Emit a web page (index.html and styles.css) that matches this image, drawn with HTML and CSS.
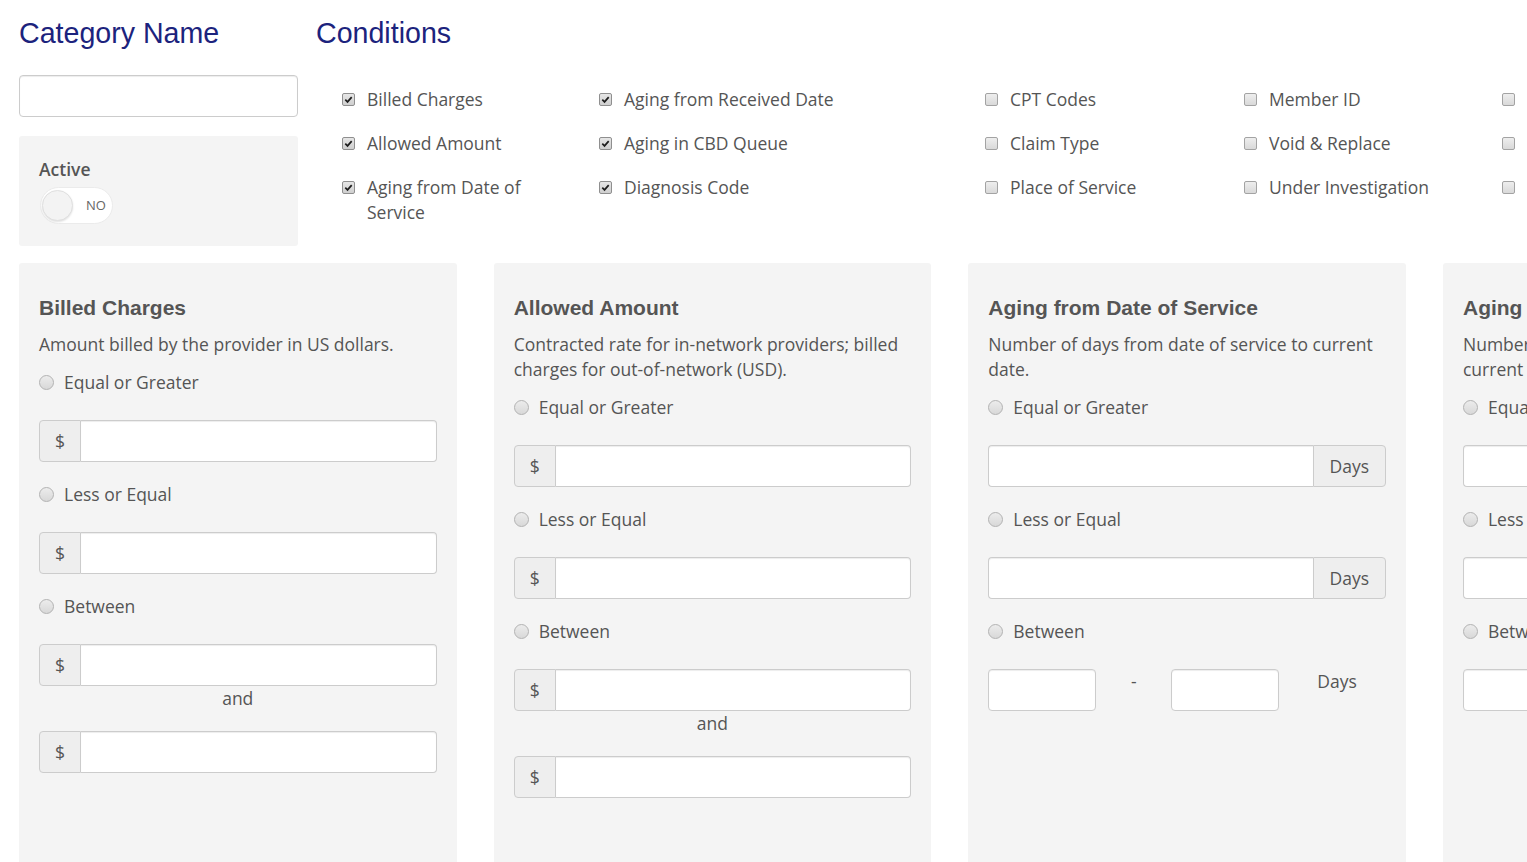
FILE: index.html
```html
<!DOCTYPE html>
<html lang="en">
<head>
<meta charset="utf-8">
<title>Category Conditions</title>
<link rel="stylesheet" href="styles.css">
</head>
<body>
<div class="top">
  <section class="left">
    <h1 class="heading">Category Name</h1>
    <input class="name-input" type="text">
    <div class="active-panel">
      <div class="active-label">Active</div>
      <div class="toggle"><span class="knob"></span><span class="toggle-text">NO</span></div>
    </div>
  </section>
  <section class="conditions">
    <h1 class="heading">Conditions</h1>
    <div class="cond-grid">
      <label class="cond"><span class="cb checked"><svg viewBox="0 0 11 11" width="11" height="11"><path d="M2.3 5.7 L4.5 7.9 L8.7 3.1" fill="none" stroke="#1e1e1e" stroke-width="1.7"/></svg></span><span class="cond-label">Billed Charges</span></label>
      <label class="cond"><span class="cb checked"><svg viewBox="0 0 11 11" width="11" height="11"><path d="M2.3 5.7 L4.5 7.9 L8.7 3.1" fill="none" stroke="#1e1e1e" stroke-width="1.7"/></svg></span><span class="cond-label">Aging from Received Date</span></label>
      <label class="cond"><span class="cb"></span><span class="cond-label">CPT Codes</span></label>
      <label class="cond"><span class="cb"></span><span class="cond-label">Member ID</span></label>
      <label class="cond"><span class="cb"></span><span class="cond-label">Provider Name</span></label>

      <label class="cond"><span class="cb checked"><svg viewBox="0 0 11 11" width="11" height="11"><path d="M2.3 5.7 L4.5 7.9 L8.7 3.1" fill="none" stroke="#1e1e1e" stroke-width="1.7"/></svg></span><span class="cond-label">Allowed Amount</span></label>
      <label class="cond"><span class="cb checked"><svg viewBox="0 0 11 11" width="11" height="11"><path d="M2.3 5.7 L4.5 7.9 L8.7 3.1" fill="none" stroke="#1e1e1e" stroke-width="1.7"/></svg></span><span class="cond-label">Aging in CBD Queue</span></label>
      <label class="cond"><span class="cb"></span><span class="cond-label">Claim Type</span></label>
      <label class="cond"><span class="cb"></span><span class="cond-label">Void &amp; Replace</span></label>
      <label class="cond"><span class="cb"></span><span class="cond-label">Claim Status</span></label>

      <label class="cond"><span class="cb checked"><svg viewBox="0 0 11 11" width="11" height="11"><path d="M2.3 5.7 L4.5 7.9 L8.7 3.1" fill="none" stroke="#1e1e1e" stroke-width="1.7"/></svg></span><span class="cond-label">Aging from Date of Service</span></label>
      <label class="cond"><span class="cb checked"><svg viewBox="0 0 11 11" width="11" height="11"><path d="M2.3 5.7 L4.5 7.9 L8.7 3.1" fill="none" stroke="#1e1e1e" stroke-width="1.7"/></svg></span><span class="cond-label">Diagnosis Code</span></label>
      <label class="cond"><span class="cb"></span><span class="cond-label">Place of Service</span></label>
      <label class="cond"><span class="cb"></span><span class="cond-label">Under Investigation</span></label>
      <label class="cond"><span class="cb"></span><span class="cond-label">Billing Provider</span></label>
    </div>
  </section>
</div>

<div class="cards">
  <div class="card">
    <h2 class="card-title">Billed Charges</h2>
    <p class="card-desc">Amount billed by the provider in US dollars.</p>
    <div class="radio-row first"><span class="radio"></span>Equal or Greater</div>
    <div class="input-group"><span class="addon addon-left">$</span><input class="field field-right" type="text"></div>
    <div class="radio-row"><span class="radio"></span>Less or Equal</div>
    <div class="input-group"><span class="addon addon-left">$</span><input class="field field-right" type="text"></div>
    <div class="radio-row"><span class="radio"></span>Between</div>
    <div class="input-group"><span class="addon addon-left">$</span><input class="field field-right" type="text"></div>
    <div class="and">and</div>
    <div class="input-group after-and"><span class="addon addon-left">$</span><input class="field field-right" type="text"></div>
  </div>

  <div class="card">
    <h2 class="card-title">Allowed Amount</h2>
    <p class="card-desc">Contracted rate for in-network providers; billed charges for out-of-network (USD).</p>
    <div class="radio-row first"><span class="radio"></span>Equal or Greater</div>
    <div class="input-group"><span class="addon addon-left">$</span><input class="field field-right" type="text"></div>
    <div class="radio-row"><span class="radio"></span>Less or Equal</div>
    <div class="input-group"><span class="addon addon-left">$</span><input class="field field-right" type="text"></div>
    <div class="radio-row"><span class="radio"></span>Between</div>
    <div class="input-group"><span class="addon addon-left">$</span><input class="field field-right" type="text"></div>
    <div class="and">and</div>
    <div class="input-group after-and"><span class="addon addon-left">$</span><input class="field field-right" type="text"></div>
  </div>

  <div class="card">
    <h2 class="card-title">Aging from Date of Service</h2>
    <p class="card-desc">Number of days from date of service to current date.</p>
    <div class="radio-row first"><span class="radio"></span>Equal or Greater</div>
    <div class="input-group"><input class="field field-left" type="text"><span class="addon addon-right">Days</span></div>
    <div class="radio-row"><span class="radio"></span>Less or Equal</div>
    <div class="input-group"><input class="field field-left" type="text"><span class="addon addon-right">Days</span></div>
    <div class="radio-row"><span class="radio"></span>Between</div>
    <div class="range"><input class="range-input" type="text"><span class="dash">-</span><input class="range-input" type="text"><span class="range-unit">Days</span></div>
  </div>

  <div class="card">
    <h2 class="card-title">Aging from Received Date</h2>
    <p class="card-desc">Number of days from the received date to current date.</p>
    <div class="radio-row first"><span class="radio"></span>Equal or Greater</div>
    <div class="input-group"><input class="field field-left" type="text"><span class="addon addon-right">Days</span></div>
    <div class="radio-row"><span class="radio"></span>Less or Equal</div>
    <div class="input-group"><input class="field field-left" type="text"><span class="addon addon-right">Days</span></div>
    <div class="radio-row"><span class="radio"></span>Between</div>
    <div class="range"><input class="range-input" type="text"><span class="dash">-</span><input class="range-input" type="text"><span class="range-unit">Days</span></div>
  </div>
</div>
</body>
</html>
```

FILE: styles.css
```css
html, body {
  margin: 0;
  padding: 0;
  overflow: hidden;
  background: #fff;
}

body {
  font-family: "Open Sans", "DejaVu Sans", sans-serif;
  font-size: 17.5px;
  line-height: 25px;
  color: #555;
}

input {
  font-family: "Open Sans", sans-serif;
  font-size: 17.5px;
  color: #555;
  outline: none;
  margin: 0;
}

.top {
  display: flex;
  gap: 18px;
  padding-left: 19px;
}

.left {
  flex: none;
  width: 279px;
}

.heading {
  margin: 0;
  padding-top: 17px;
  font-family: "Liberation Sans", Arial, sans-serif;
  font-weight: 400;
  font-size: 28.6px;
  line-height: 32px;
  color: #1c237d;
}

.name-input {
  display: block;
  box-sizing: border-box;
  width: 100%;
  height: 42px;
  margin-top: 26px;
  border: 1px solid #ccc;
  border-radius: 4px;
  background: #fff;
  box-shadow: inset 0 1px 1px rgba(0, 0, 0, 0.075);
}

.active-panel {
  margin-top: 19px;
  padding: 21px 20px 22px;
  background: #f4f4f4;
  border-radius: 3px;
}

.active-label {
  font-weight: 600;
  color: #555;
}

.toggle {
  box-sizing: border-box;
  display: flex;
  align-items: center;
  width: 73px;
  height: 37px;
  margin-top: 5px;
  margin-left: 1px;
  padding-left: 1px;
  background: #fff;
  border: 1px solid #ebebeb;
  border-radius: 19px;
}

.knob {
  box-sizing: border-box;
  flex: none;
  width: 31px;
  height: 31px;
  border-radius: 50%;
  background: #f3f3f3;
  border: 1px solid #e0e0e0;
  box-shadow: 0 1px 2px rgba(0, 0, 0, 0.12);
}

.toggle-text {
  margin-left: 13px;
  font-size: 13px;
  color: #666;
}

.conditions {
  flex: none;
}

.cond-grid {
  display: grid;
  grid-template-columns: 257px 386px 259px 258px 258px;
  row-gap: 19px;
  margin-top: 38px;
  padding-left: 26px;
}

.cond {
  display: flex;
  align-items: flex-start;
  padding-right: 30px;
}

.cb {
  box-sizing: border-box;
  flex: none;
  display: flex;
  align-items: center;
  justify-content: center;
  width: 13px;
  height: 13px;
  margin-top: 6px;
  border: 1px solid #a3a3a3;
  border-radius: 2px;
  background: linear-gradient(#eeeeee, #d9d9d9);
}

.cb.checked {
  border-color: #8f8f8f;
  background: linear-gradient(#e6e6e6, #cfcfcf);
}

.cond-label {
  margin-left: 12px;
}

.cards {
  display: flex;
  gap: 37.17px;
  margin-top: 17px;
  padding-left: 19px;
}

.card {
  box-sizing: border-box;
  flex: none;
  width: 437.5px;
  min-height: 640px;
  padding: 32px 20px 20px;
  background: #f4f4f4;
  border-radius: 3px;
}

.card-title {
  margin: 0;
  font-family: "Liberation Sans", Arial, sans-serif;
  font-weight: 700;
  font-size: 21px;
  line-height: 25px;
  color: #555;
}

.card-desc {
  margin: 12px 0 0;
}

.radio-row {
  display: flex;
  align-items: center;
  margin-top: 20px;
}

.radio-row.first {
  margin-top: 13px;
}

.radio {
  box-sizing: border-box;
  flex: none;
  width: 15px;
  height: 15px;
  margin-right: 10px;
  border: 1px solid #b2b2b2;
  border-radius: 50%;
  background: linear-gradient(#ececec, #d8d8d8);
}

.input-group {
  display: flex;
  height: 42px;
  margin-top: 25px;
}

.input-group.after-and {
  margin-top: 20px;
}

.addon {
  box-sizing: border-box;
  flex: none;
  display: flex;
  align-items: center;
  justify-content: center;
  background: #eee;
  border: 1px solid #ccc;
  color: #555;
}

.addon-left {
  width: 42px;
  border-radius: 4px 0 0 4px;
}

.addon-right {
  width: 73px;
  border-radius: 0 4px 4px 0;
}

.field {
  box-sizing: border-box;
  flex: 1;
  min-width: 0;
  height: 42px;
  padding: 0 12px;
  background: #fff;
  border: 1px solid #ccc;
  box-shadow: inset 0 1px 1px rgba(0, 0, 0, 0.075);
}

.field-right {
  border-left: 0;
  border-radius: 0 4px 4px 0;
}

.field-left {
  border-right: 0;
  border-radius: 4px 0 0 4px;
}

.and {
  text-align: center;
}

.range {
  display: flex;
  align-items: flex-start;
  margin-top: 25px;
}

.range-input {
  box-sizing: border-box;
  flex: none;
  width: 108px;
  height: 42px;
  padding: 0 12px;
  background: #fff;
  border: 1px solid #ccc;
  border-radius: 4px;
  box-shadow: inset 0 1px 1px rgba(0, 0, 0, 0.075);
}

.dash {
  flex: none;
  width: 75px;
  text-align: center;
}

.range-unit {
  margin-left: 38px;
}
```
